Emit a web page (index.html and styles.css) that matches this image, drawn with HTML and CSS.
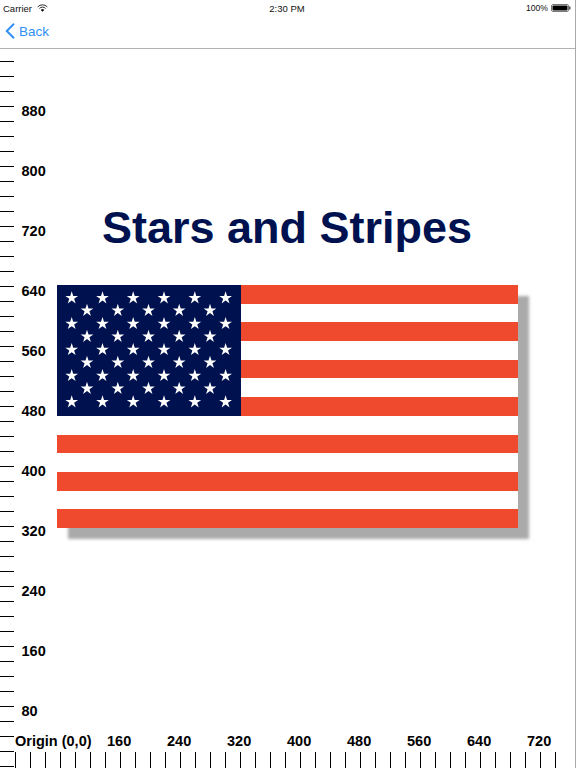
FILE: index.html
```html
<!DOCTYPE html>
<html>
<head>
  <meta charset="UTF-8">
  <title>Stars and Stripes</title>
  <link rel="stylesheet" href="styles.css">
</head>
<body>
  <div class="status">
    <div class="carrier">Carrier
      <svg class="wifi" width="11" height="8" viewBox="0 0 12 9">
        <path d="M.6 3.2a7.6 7.6 0 0 1 10.8 0M2.500 5a4.900 4.900 0 0 1 7 0" fill="none" stroke="#111" stroke-width="1"/>
        <path d="M6 8.600 4 6.700a2.900 2.900 0 0 1 4 0z" fill="#111"/>
      </svg>
    </div>
    <div class="clock">2:30 PM</div>
    <div class="power">100%
      <svg width="20" height="8" viewBox="0 0 20 8">
        <rect x=".5" y=".5" width="17" height="7" rx="1.500" fill="none" stroke="#777"/>
        <rect x="1.500" y="1.500" width="15" height="5" rx="1" fill="#000"/>
        <rect x="18" y="2.500" width="1.500" height="3" fill="#555"/>
      </svg>
    </div>
  </div>

  <div class="navbar">
    <svg class="chevron" width="10" height="16" viewBox="0 0 10 16">
      <path d="M9 .8 1.800 8 9 15.200" fill="none" stroke="#2f8ff5" stroke-width="2"/>
    </svg>
    <span class="back">Back</span>
  </div>

  <div class="canvas">
    <!-- left ruler, every 4th tick gets a label -->
    <div class="ruler-left">
      <div class="ylabel">880</div>
      <div class="ylabel">800</div>
      <div class="ylabel">720</div>
      <div class="ylabel">640</div>
      <div class="ylabel">560</div>
      <div class="ylabel">480</div>
      <div class="ylabel">400</div>
      <div class="ylabel">320</div>
      <div class="ylabel">240</div>
      <div class="ylabel">160</div>
      <div class="ylabel">80</div>
    </div>

    <div class="drawing">
      <h1 class="title">Stars and Stripes</h1>
      <div class="flag">
        <svg class="union" width="184" height="131" viewBox="0 0 184 131">
          <defs>
            <polygon id="star" points="0,-6.700 1.500,-2.070 6.370,-2.070 2.430,.79 3.940,5.420 0,2.560 -3.940,5.420 -2.430,.79 -6.370,-2.070 -1.500,-2.070" fill="#fff"/>
            <g id="row6">
              <use href="#star" x="14.700"/>
              <use href="#star" x="45.500"/>
              <use href="#star" x="76.200"/>
              <use href="#star" x="107"/>
              <use href="#star" x="137.800"/>
              <use href="#star" x="168.600"/>
            </g>
            <g id="row5">
              <use href="#star" x="30"/>
              <use href="#star" x="60.800"/>
              <use href="#star" x="91.500"/>
              <use href="#star" x="122.200"/>
              <use href="#star" x="153"/>
            </g>
          </defs>
          <use href="#row6" y="13"/>
          <use href="#row5" y="25.500"/>
          <use href="#row6" y="38.700"/>
          <use href="#row5" y="51.500"/>
          <use href="#row6" y="64.700"/>
          <use href="#row5" y="77.500"/>
          <use href="#row6" y="90.700"/>
          <use href="#row5" y="103.500"/>
          <use href="#row6" y="117"/>
        </svg>
        <div class="stripe red"></div><div class="stripe"></div>
        <div class="stripe red"></div><div class="stripe"></div>
        <div class="stripe red"></div><div class="stripe"></div>
        <div class="stripe red"></div><div class="stripe"></div>
        <div class="stripe red"></div><div class="stripe"></div>
        <div class="stripe red"></div><div class="stripe"></div>
        <div class="stripe red"></div>
      </div>
    </div>

    <div class="ruler-bottom">
      <div class="xlabels">
        <span class="origin">Origin (0,0)</span>
        <span class="xlabel">160</span>
        <span class="xlabel">240</span>
        <span class="xlabel">320</span>
        <span class="xlabel">400</span>
        <span class="xlabel">480</span>
        <span class="xlabel">560</span>
        <span class="xlabel">640</span>
        <span class="xlabel">720</span>
      </div>
      <div class="xticks"></div>
    </div>
  </div>
</body>
</html>
```

FILE: styles.css
```css
* {
  box-sizing: border-box;
}

html, body {
  margin: 0;
  height: 768px;
  overflow: hidden;
  background: #fff;
}

body {
  width: 576px;
  font-family: "Liberation Sans", Arial, sans-serif;
  color: #000;
  border-right: 1px solid #aaa;
}

.status {
  height: 16px;
  padding: 0 4px 0 3px;
  display: grid;
  grid-template-columns: 1fr auto 1fr;
  align-items: center;
  font-size: 9.5px;
  color: #111;
}

.carrier {
  display: flex;
  align-items: center;
  gap: 5px;
}

.power {
  display: flex;
  align-items: center;
  justify-content: flex-end;
  gap: 3px;
  font-size: 8.6px;
}

.navbar {
  height: 33px;
  padding: 0 0 2px 5px;
  display: flex;
  align-items: center;
  gap: 4px;
  border-bottom: 1px solid #b2b2b2;
}

.back {
  font-size: 13.5px;
  color: #2f8ff5;
}

.canvas {
  height: 719px;
  display: grid;
  grid-template-columns: 57px 518px;
  grid-template-rows: 1fr 37px;
}

.ruler-left {
  padding-top: 47px;
  background: repeating-linear-gradient(#000 0 1px, transparent 1px 15px) 0 12px / 14px 100% no-repeat;
  grid-row: 1 / 3;
  grid-column: 1;
}

.ylabel {
  height: 60px;
  padding-left: 21.5px;
  font-size: 14.5px;
  font-weight: bold;
  line-height: 30px;
}

.drawing {
  grid-row: 1;
  grid-column: 2;
  padding-top: 153px;
}

.title {
  margin: 0 0 31px -58px;
  width: 576px;
  height: 52px;
  text-align: center;
  font-size: 45px;
  line-height: 52px;
  color: #00114f;
}

.flag {
  position: relative;
  width: 461px;
  height: 243px;
  display: flex;
  flex-direction: column;
  box-shadow: 11px 11px 3px #aaa;
  background: #fff;
}

.union {
  position: absolute;
  left: 0;
  top: 0;
  background: #00114f;
}

.stripe {
  flex: 1;
}

.red {
  background: #f04a2e;
}

.ruler-bottom {
  grid-row: 2;
  grid-column: 1 / 3;
}

.xlabels {
  height: 21px;
  padding-left: 15px;
  display: flex;
  font-size: 14.5px;
  font-weight: bold;
  line-height: 20px;
}

.origin {
  flex: none;
  width: 92px;
}

.xlabel {
  flex: none;
  width: 60px;
}

.xticks {
  height: 16px;
  width: 541px;
  margin-left: 15px;
  background: repeating-linear-gradient(90deg, #000 0 1px, transparent 1px 15px);
}
```
